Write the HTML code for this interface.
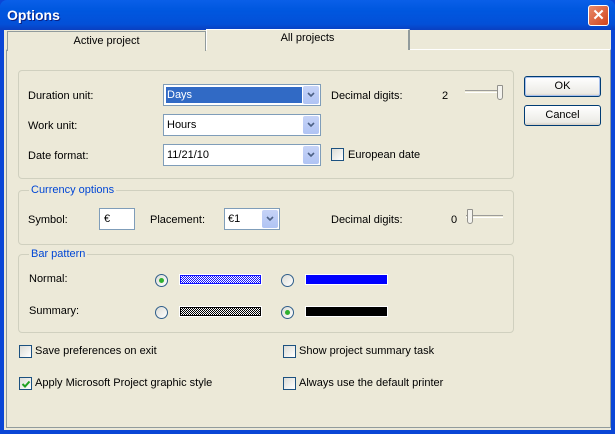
<!DOCTYPE html>
<html><head><style>
*{margin:0;padding:0;box-sizing:border-box}
body{width:615px;height:434px;overflow:hidden;background:#0a46d6;font-family:"Liberation Sans",sans-serif;font-size:11px;color:#000;position:relative}
.a{position:absolute}
#title{left:0;top:0;width:615px;height:30px;background:linear-gradient(#0a5fe8,#0058e0 30%,#0350d8 80%,#0a3fc0);border-radius:7px 7px 0 0}
#title span{position:absolute;left:7px;top:7px;color:#fff;font-weight:bold;font-size:14px;text-shadow:1px 1px #0a1e80}
#close{left:588px;top:5px;width:21px;height:21px;border:1px solid #fff;border-radius:3px;background:linear-gradient(135deg,#e88a6a,#d2441c);color:#fff;font-weight:bold;font-size:15px;text-align:center;line-height:19px}
#client{left:4px;top:30px;width:607px;height:400px;background:#ece9d8}
.tab{height:20px;text-align:center;line-height:19px;background:#ece9d8}
.grp{border:1px solid #d0d0bf;border-radius:4px}
.lg{background:#ece9d8;color:#0046d5;padding:0 2px}
.combo{height:22px;border:1px solid #7f9db9;background:#fff;padding:4px 3px;line-height:13px}
.combo .btn{position:absolute;right:1px;top:1px;width:16px;height:18px;background:linear-gradient(#c6d3f7,#b0c4f4);border-radius:2px}
.combo .btn svg{position:absolute;left:4px;top:6px}
.cb{width:13px;height:13px;border:1px solid #1c5180;background:linear-gradient(135deg,#dcdcd6,#fff)}
.rd{width:13px;height:13px;border:1px solid #2f5e8a;border-radius:50%;background:linear-gradient(135deg,#dcdcd6,#fff)}
.rd.on::after{content:"";position:absolute;left:3px;top:3px;width:5px;height:5px;border-radius:50%;background:#2fb02f}
.bt{width:77px;height:21px;border:1px solid #003c74;border-radius:3px;background:linear-gradient(#fff,#ecebe6 85%,#d6d0c5);text-align:center;line-height:19px}
.sl{height:3px;border-top:1px solid #9d9c99;border-bottom:1px solid #fff;background:#ece9d8}
.th{width:6px;height:15px;background:#f4f3ee;border:1px solid #92918c;border-radius:1px 1px 3px 3px}
</style></head><body>
<div id="title" class="a"><span>Options</span></div>
<div id="close" class="a">✕</div>
<div id="client" class="a"></div>
<div class="a" style="left:6px;top:49px;width:605px;height:379px;border:1px solid #919b9c;border-top-color:#fff"></div>
<div class="a tab" style="left:7px;top:31px;width:199px;border:1px solid #919b9c;border-bottom:none;">Active project</div>
<div class="a tab" style="left:206px;top:29px;width:204px;height:21px;border:1px solid #fff;border-right:2px solid #919b9c;border-bottom:none;background:#ece9d8;line-height:17px">All projects</div>

<div class="a grp" style="left:18px;top:70px;width:496px;height:109px"></div>
<div class="a" style="left:28px;top:90px">Duration unit:</div>
<div class="a" style="left:28px;top:120px">Work unit:</div>
<div class="a" style="left:28px;top:150px">Date format:</div>
<div class="a combo" style="left:163px;top:84px;width:158px"><div class="a" style="left:2px;top:2px;width:136px;height:16px;background:#316ac5;color:#fff;padding:2px 1px;line-height:13px">Days</div><div class="btn"><svg width="8" height="6"><path d="M1 1l3 3 3-3" stroke="#4d6185" stroke-width="1.6" fill="none"/></svg></div></div>
<div class="a combo" style="left:163px;top:114px;width:158px">Hours<div class="btn"><svg width="8" height="6"><path d="M1 1l3 3 3-3" stroke="#4d6185" stroke-width="1.6" fill="none"/></svg></div></div>
<div class="a combo" style="left:163px;top:144px;width:158px">11/21/10<div class="btn"><svg width="8" height="6"><path d="M1 1l3 3 3-3" stroke="#4d6185" stroke-width="1.6" fill="none"/></svg></div></div>
<div class="a" style="left:331px;top:90px">Decimal digits:</div>
<div class="a" style="left:442px;top:90px">2</div>
<div class="a sl" style="left:465px;top:90px;width:38px"></div>
<div class="a th" style="left:497px;top:85px"></div>
<div class="a cb" style="left:331px;top:148px"></div>
<div class="a" style="left:348px;top:149px">European date</div>

<div class="a grp" style="left:18px;top:190px;width:496px;height:55px"></div>
<div class="a lg" style="left:29px;top:184px">Currency options</div>
<div class="a" style="left:28px;top:214px">Symbol:</div>
<div class="a" style="left:99px;top:208px;width:36px;height:22px;border:1px solid #7f9db9;background:#fff;padding:4px 4px;line-height:13px">€</div>
<div class="a" style="left:150px;top:214px">Placement:</div>
<div class="a combo" style="left:224px;top:208px;width:56px">€1<div class="btn"><svg width="8" height="6"><path d="M1 1l3 3 3-3" stroke="#4d6185" stroke-width="1.6" fill="none"/></svg></div></div>
<div class="a" style="left:331px;top:214px">Decimal digits:</div>
<div class="a" style="left:451px;top:214px">0</div>
<div class="a sl" style="left:466px;top:215px;width:37px"></div>
<div class="a th" style="left:467px;top:209px"></div>

<div class="a grp" style="left:18px;top:254px;width:496px;height:79px"></div>
<div class="a lg" style="left:29px;top:248px">Bar pattern</div>
<div class="a" style="left:29px;top:273px">Normal:</div>
<div class="a" style="left:29px;top:305px">Summary:</div>
<div class="a rd on" style="left:155px;top:274px"></div>
<div class="a rd" style="left:281px;top:274px"></div>
<div class="a rd" style="left:155px;top:306px"></div>
<div class="a rd on" style="left:281px;top:306px"></div>
<div class="a" style="left:179px;top:274px;width:83px;height:11px;border:1px solid #fff;background:repeating-conic-gradient(#1010ff 0 25%,#fff 0 50%) 0 0/2px 2px;outline:1px solid #1010ff;outline-offset:-2px"></div>
<div class="a" style="left:305px;top:274px;width:83px;height:11px;background:#0000ff;border:1px solid #fff"></div>
<div class="a" style="left:179px;top:306px;width:83px;height:11px;border:1px solid #fff;background:repeating-conic-gradient(#000 0 25%,#fff 0 50%) 0 0/2px 2px;outline:1px solid #000;outline-offset:-2px"></div>
<div class="a" style="left:305px;top:306px;width:83px;height:11px;background:#000;border:1px solid #fff"></div>

<div class="a cb" style="left:19px;top:345px"></div>
<div class="a" style="left:35px;top:345px">Save preferences on exit</div>
<div class="a cb" style="left:19px;top:377px"><svg class="a" style="left:1px;top:1px" width="10" height="10"><path d="M1.5 5l2.5 2.5 4.5-5" stroke="#21a121" stroke-width="2" fill="none"/></svg></div>
<div class="a" style="left:35px;top:377px">Apply Microsoft Project graphic style</div>
<div class="a cb" style="left:283px;top:345px"></div>
<div class="a" style="left:299px;top:345px">Show project summary task</div>
<div class="a cb" style="left:283px;top:377px"></div>
<div class="a" style="left:299px;top:377px">Always use the default printer</div>

<div class="a bt" style="left:524px;top:76px;box-shadow:inset 0 0 0 1px #a9c1ec">OK</div>
<div class="a bt" style="left:524px;top:105px">Cancel</div>
</body></html>
